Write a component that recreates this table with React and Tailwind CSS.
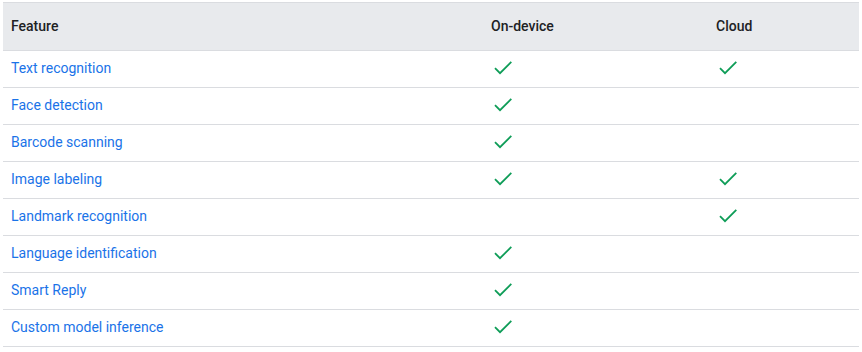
const rows = [
  ["Text recognition", true, true],
  ["Face detection", true, false],
  ["Barcode scanning", true, false],
  ["Image labeling", true, true],
  ["Landmark recognition", false, true],
  ["Language identification", true, false],
  ["Smart Reply", true, false],
  ["Custom model inference", true, false],
];

function Check() {
  return (
    <svg width="24" height="24" viewBox="0 0 24 24" fill="none" stroke="#0f9d58" strokeWidth="1.8">
      <path d="M4 12.2l5 5L20.3 5.9" />
    </svg>
  );
}

export default function App() {
  return (
    <div className="bg-white w-[862px] h-[352px] pt-[2px] pl-[3px] font-['Roboto',sans-serif] text-[14px]">
      <div className="w-[856px] border-t border-[#dadce0]">
        <div className="grid grid-cols-[480px_225px_1fr] h-[48px] items-center bg-[#e8eaed] border-b border-[#dadce0] text-[#202124] font-medium">
          <div className="px-2">Feature</div>
          <div className="px-2">On-device</div>
          <div className="px-2">Cloud</div>
        </div>
        {rows.map(([name, dev, cloud]) => (
          <div
            key={name}
            className="grid grid-cols-[480px_225px_1fr] h-[37px] pb-[2px] items-center border-b border-[#dadce0]"
          >
            <div className="px-2 text-[#1a73e8]">{name}</div>
            <div className="px-2 flex">{dev && <Check />}</div>
            <div className="px-2 flex">{cloud && <Check />}</div>
          </div>
        ))}
      </div>
    </div>
  );
}
